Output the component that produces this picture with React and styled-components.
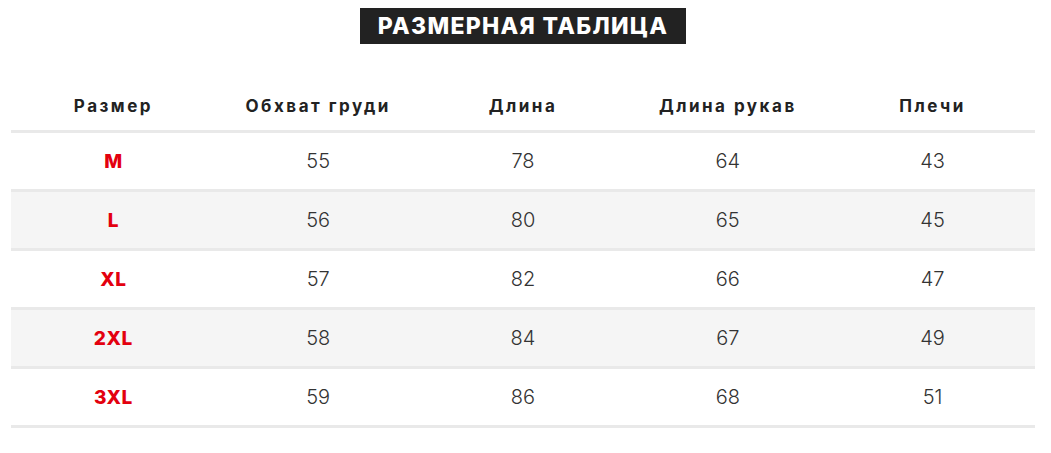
import React from 'react'
import styled, { createGlobalStyle } from 'styled-components'

const GlobalStyle = createGlobalStyle`
  html, body {
    margin: 0;
    padding: 0;
    background: #fff;
  }
  body {
    font-family: "Inter", "Noto Sans", sans-serif;
  }
`

const rows = [
  { size: 'M', chest: 55, length: 78, sleeve: 64, shoulders: 43 },
  { size: 'L', chest: 56, length: 80, sleeve: 65, shoulders: 45 },
  { size: 'XL', chest: 57, length: 82, sleeve: 66, shoulders: 47 },
  { size: '2XL', chest: 58, length: 84, sleeve: 67, shoulders: 49 },
  { size: '3XL', chest: 59, length: 86, sleeve: 68, shoulders: 51 },
]

const headers = ['Размер', 'Обхват груди', 'Длина', 'Длина рукав', 'Плечи']

const Page = styled.div`
  width: 1051px;
  padding: 8px 0 0 11px;
  box-sizing: border-box;
`

const TitleBar = styled.div`
  display: flex;
  justify-content: center;
  width: 1024px;
`

const Title = styled.h2`
  margin: 0;
  background: #222;
  color: #fff;
  font-family: "Inter", "Noto Sans", sans-serif;
  font-weight: 800;
  font-size: 23px;
  line-height: 36px;
  height: 36px;
  width: 326px;
  padding: 0;
  text-align: center;
  letter-spacing: 1.3px;
  white-space: nowrap;
`

const Table = styled.table`
  width: 1024px;
  margin-top: 38px;
  border-collapse: collapse;
  table-layout: fixed;
`

const HeadCell = styled.th`
  height: 48px;
  padding: 0;
  font-size: 17px;
  font-weight: 700;
  letter-spacing: 2.5px;
  color: #222;
  text-align: center;
  vertical-align: middle;
  border-bottom: 3px solid #e9e9e9;
`

const Row = styled.tr`
  background: ${p => (p.$shaded ? '#f5f5f5' : '#fff')};
  border-bottom: 3px solid #e9e9e9;
`

const Cell = styled.td`
  height: 56px;
  padding: 0;
  text-align: center;
  vertical-align: middle;
  font-size: 20px;
  font-weight: 300;
  color: #333;
`

const SizeCell = styled(Cell)`
  font-size: 19px;
  font-weight: 800;
  letter-spacing: 0.6px;
  color: #e3000f;
`

export default function App() {
  return (
    <Page>
      <GlobalStyle />
      <TitleBar>
        <Title>РАЗМЕРНАЯ ТАБЛИЦА</Title>
      </TitleBar>
      <Table>
        <thead>
          <tr>
            {headers.map(h => (
              <HeadCell key={h}>{h}</HeadCell>
            ))}
          </tr>
        </thead>
        <tbody>
          {rows.map((r, i) => (
            <Row key={r.size} $shaded={i % 2 === 1}>
              <SizeCell>{r.size}</SizeCell>
              <Cell>{r.chest}</Cell>
              <Cell>{r.length}</Cell>
              <Cell>{r.sleeve}</Cell>
              <Cell>{r.shoulders}</Cell>
            </Row>
          ))}
        </tbody>
      </Table>
    </Page>
  )
}
